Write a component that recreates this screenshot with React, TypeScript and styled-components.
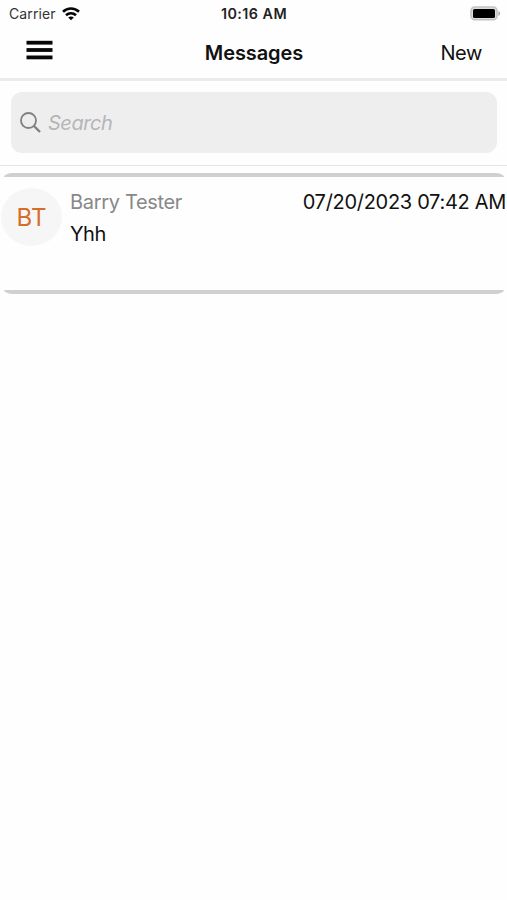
import React from "react";
import styled, { createGlobalStyle } from "styled-components";

const GlobalStyle = createGlobalStyle`
  * { box-sizing: border-box; }
  body {
    margin: 0;
    background: #fefefe;
    color: #111;
    font-family: Inter, "Liberation Sans", sans-serif;
  }
`;

const Screen = styled.main`
  display: flex;
  flex-direction: column;
  width: 100%;
  height: 900px;
  background: #fefefe;
  overflow: hidden;
`;

const Label = styled.span<{ $size: number; $spacing?: number; $weight?: number; $color?: string }>`
  margin: 0;
  font-size: ${(p) => p.$size}px;
  line-height: 24px;
  letter-spacing: ${(p) => p.$spacing ?? 0}px;
  font-weight: ${(p) => p.$weight ?? 400};
  color: ${(p) => p.$color ?? "#111"};
  white-space: nowrap;
`;

const StatusBar = styled.div`
  display: grid;
  grid-template-columns: 1fr auto 1fr;
  align-items: center;
  height: 27px;
  padding: 0 6px 0 9px;
`;

const Carrier = styled.div`
  display: flex;
  align-items: center;
  gap: 6px;
`;

const Clock = styled(Label)`
  margin-right: 2px;
`;

const Battery = styled.svg`
  justify-self: end;
`;

const NavBar = styled.header`
  display: grid;
  grid-template-columns: 1fr auto 1fr;
  align-items: center;
  height: 54px;
  padding: 1px 25px 0 26px;
  border-bottom: 3px solid #ebebeb;
`;

const IconButton = styled.button`
  display: flex;
  justify-self: start;
  padding: 0;
  margin-bottom: 7px;
  border: 0;
  background: none;
`;

const TextButton = styled.button`
  display: flex;
  justify-self: end;
  padding: 0;
  border: 0;
  background: none;
  font-family: inherit;
`;

const SearchArea = styled.section`
  height: 85px;
  padding: 11px 10px 12px 11px;
  border-bottom: 1px solid #e6e6e6;
`;

const SearchBox = styled.div`
  display: flex;
  align-items: center;
  gap: 7px;
  height: 61px;
  padding-left: 9px;
  border-radius: 11px;
  background: #eee;
  font-style: italic;
`;

const Card = styled.article`
  display: flex;
  flex-direction: column;
  height: 121px;
  margin-top: 7px;
`;

const Edge = styled.div<{ $bottom?: boolean }>`
  height: 4px;
  margin: 0 3px 0 4px;
  background: #d0d0d0;
  border-radius: ${(p) => (p.$bottom ? "0 0 9px 9px / 0 0 4px 4px" : "9px 9px 0 0 / 4px 4px 0 0")};
`;

const CardBody = styled.div`
  display: flex;
  flex: 1;
  padding: 11px 1px 0 1px;
`;

const Avatar = styled.div`
  display: flex;
  align-items: center;
  justify-content: center;
  width: 61px;
  height: 58px;
  padding-top: 1px;
  border-radius: 50%;
  background: #f6f6f6;
`;

const Content = styled.div`
  display: flex;
  flex: 1;
  flex-direction: column;
  gap: 8px;
  padding: 2px 0 0 8px;
`;

const Row = styled.div`
  display: flex;
  justify-content: space-between;
`;

export default function App() {
  return (
    <Screen>
      <GlobalStyle />
      <StatusBar>
        <Carrier>
          <Label $size={14} $spacing={0.1} $color="#333">Carrier</Label>
          <svg width="18" height="14" viewBox="0 0 18 14" fill="none" stroke="#050505" strokeWidth="2.6">
            <path d="M1 4.8C5.5 0.4 12.5 0.4 17 4.8" />
            <path d="M4 8.3C6.8 5.6 11.2 5.6 14 8.3" />
            <path d="M6.2 10.5C7.7 9 10.3 9 11.8 10.5L9 13.3Z" fill="#050505" stroke="none" />
          </svg>
        </Carrier>
        <Clock $size={14.3} $spacing={0.46} $weight={600} $color="#222">10:16 AM</Clock>
        <Battery width="31" height="15" viewBox="0 0 31 15">
          <rect x="1" y="1" width="26" height="12.8" rx="4" fill="#ddd" stroke="#c2c2c2" strokeWidth="1.6" />
          <rect x="3" y="2.9" width="22" height="9.1" rx="1.6" fill="#000" />
          <path d="M28.3 5C30.8 5.7 30.8 9.2 28.3 10Z" fill="#b0b0b0" />
        </Battery>
      </StatusBar>
      <NavBar>
        <IconButton aria-label="Menu">
          <svg width="27" height="20" viewBox="0 0 27 20" fill="#080808">
            <rect x="0.5" y="0.8" width="26" height="3.8" />
            <rect x="0.5" y="8.1" width="26" height="3.8" />
            <rect x="0.5" y="15.5" width="26" height="3.8" />
          </svg>
        </IconButton>
        <Label as="h1" $size={20} $spacing={-0.1} $weight={600}>Messages</Label>
        <TextButton>
          <Label $size={20} $spacing={-0.4}>New</Label>
        </TextButton>
      </NavBar>
      <SearchArea>
        <SearchBox>
          <svg width="21" height="21" viewBox="0 0 21 21" fill="none" stroke="#808080">
            <circle cx="8.5" cy="8.5" r="7.5" strokeWidth="1.8" />
            <path d="M14 14L20 20" strokeWidth="2.4" />
          </svg>
          <Label $size={20} $spacing={-0.45} $color="#b5b5b8">Search</Label>
        </SearchBox>
      </SearchArea>
      <Card>
        <Edge />
        <CardBody>
          <Avatar>
            <Label $size={24} $color="#d66d29">BT</Label>
          </Avatar>
          <Content>
            <Row>
              <Label $size={20} $spacing={-0.33} $color="#888">Barry Tester</Label>
              <Label $size={20} $spacing={-0.3}>07/20/2023 07:42 AM</Label>
            </Row>
            <Label $size={20} $spacing={-0.5}>Yhh</Label>
          </Content>
        </CardBody>
        <Edge $bottom />
      </Card>
    </Screen>
  );
}
